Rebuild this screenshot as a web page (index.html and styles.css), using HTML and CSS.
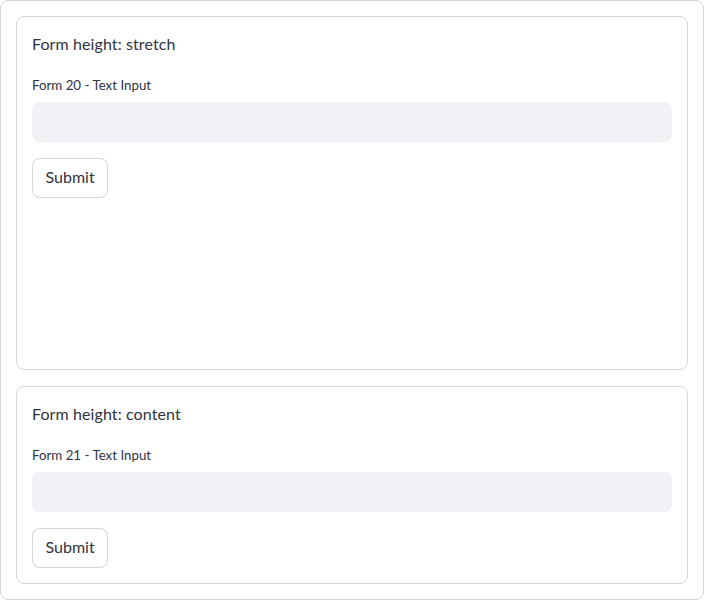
FILE: index.html
```html
<!DOCTYPE html>
<html>
<head>
<meta charset="utf-8">
<link rel="stylesheet" href="styles.css">
</head>
<body>
<div class="outer">
  <form class="form form-stretch">
    <div class="title">Form height: stretch</div>
    <label class="label" for="f20">Form 20 - Text Input</label>
    <input class="text-input" id="f20" type="text">
    <div class="btn-row"><button class="btn" type="button">Submit</button></div>
  </form>
  <form class="form form-content">
    <div class="title">Form height: content</div>
    <label class="label" for="f21">Form 21 - Text Input</label>
    <input class="text-input" id="f21" type="text">
    <div class="btn-row"><button class="btn" type="button">Submit</button></div>
  </form>
</div>
</body>
</html>
```
FILE: styles.css
```css
html, body {
  margin: 0;
  padding: 0;
  background: #ffffff;
}
body {
  font-family: Lato, "Noto Sans", sans-serif;
  color: #31333f;
}
.outer {
  box-sizing: border-box;
  width: 704px;
  height: 600px;
  border: 1px solid rgba(49, 51, 63, 0.2);
  border-radius: 8px;
  padding: 15px;
  display: flex;
  flex-direction: column;
  gap: 16px;
}
.form {
  box-sizing: border-box;
  margin: 0;
  border: 1px solid rgba(49, 51, 63, 0.2);
  border-radius: 8px;
  padding: 15px;
  display: flex;
  flex-direction: column;
}
.form-stretch {
  flex: 1 1 auto;
}
.form-content {
  flex: 0 0 auto;
}
.title {
  font-size: 16px;
  line-height: 24px;
  height: 24px;
  margin-bottom: 18px;
  letter-spacing: 0.1px;
}
.label {
  display: block;
  box-sizing: border-box;
  font-size: 13.3px;
  line-height: 22px;
  height: 24px;
  margin-bottom: 4px;
}
.text-input {
  box-sizing: border-box;
  height: 40px;
  width: 100%;
  border: none;
  border-radius: 8px;
  background: #f0f2f6;
  margin: 0 0 16px 0;
  padding: 0 12px;
  font: inherit;
  outline: none;
}
.btn-row {
  display: flex;
}
.btn {
  box-sizing: border-box;
  height: 40px;
  padding: 0 12.5px 3px;
  border: 1px solid rgba(49, 51, 63, 0.2);
  border-radius: 8px;
  background: #ffffff;
  color: #31333f;
  font-family: inherit;
  font-size: 16px;
  cursor: pointer;
}
```
